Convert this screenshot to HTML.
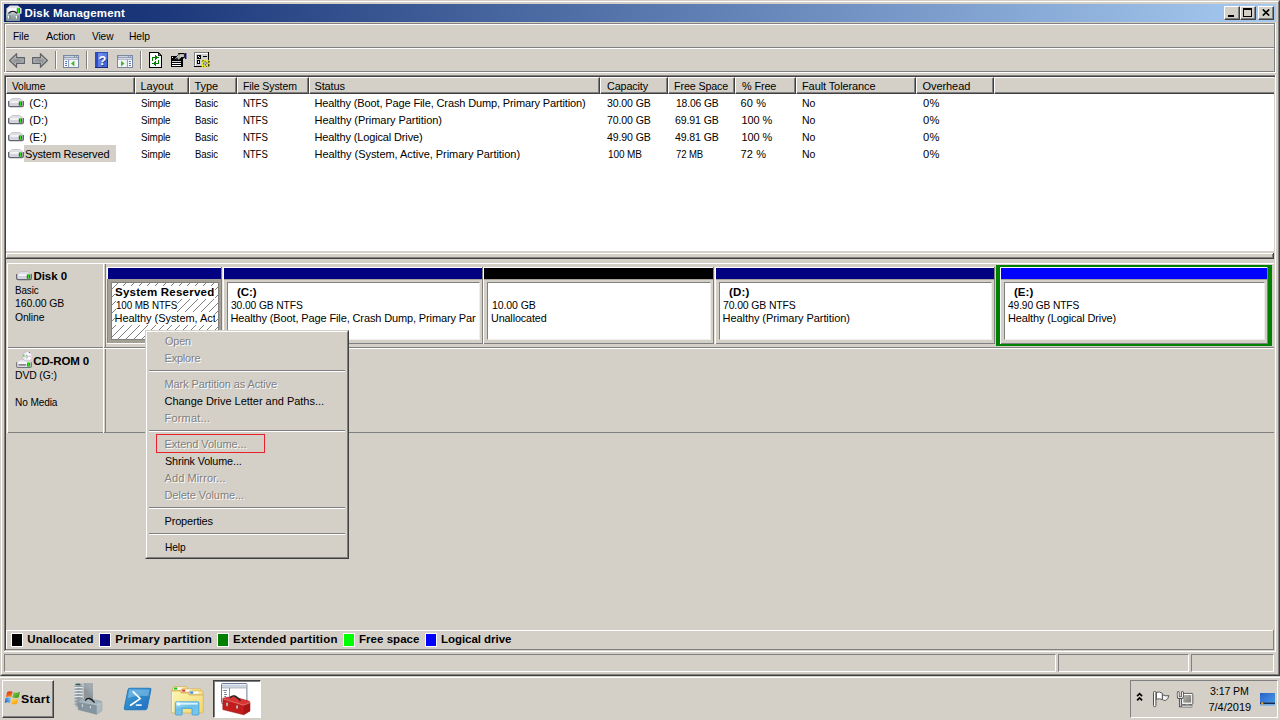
<!DOCTYPE html>
<html>
<head>
<meta charset="utf-8">
<title>Disk Management</title>
<style>
html,body{margin:0;padding:0;}
body{width:1280px;height:720px;overflow:hidden;background:#d4d0c8;position:relative;
 font-family:"Liberation Sans",sans-serif;font-size:11px;color:#000;line-height:13px;}
.a{position:absolute;white-space:nowrap;box-sizing:border-box;}
.t{position:absolute;white-space:pre;height:13px;line-height:13px;}
.b{font-weight:bold;font-size:11.5px;}
#title{left:4px;top:4px;width:1272px;height:18px;background:linear-gradient(to right,#0a246a 0%,#a6caf0 100%);}
.wbtn{position:absolute;top:6px;width:16px;height:14px;box-sizing:border-box;background:#d4d0c8;
 border-top:1px solid #fff;border-left:1px solid #fff;border-right:1px solid #404040;border-bottom:1px solid #404040;}
.wbtn i{position:absolute;left:0;top:0;right:0;bottom:0;border-right:1px solid #808080;border-bottom:1px solid #808080;}
.hd{position:absolute;top:77px;height:17px;box-sizing:border-box;background:#d4d0c8;
 border-top:1px solid #fff;border-left:1px solid #fff;border-right:1px solid #404040;border-bottom:1px solid #404040;}
.hd i{position:absolute;left:0;top:0;right:0;bottom:0;border-right:1px solid #808080;border-bottom:1px solid #808080;}
.sunk{position:absolute;box-sizing:border-box;border-top:1px solid #808080;border-left:1px solid #808080;border-right:1px solid #fff;border-bottom:1px solid #fff;}
.gray{color:#808080;text-shadow:1px 1px 0 #fff;}
.ln{position:absolute;}
.lg{position:absolute;top:633px;width:12px;height:14px;box-sizing:border-box;border:1px solid #fff;}
</style>
</head>
<body>

<svg width="0" height="0" style="position:absolute"><defs>
<linearGradient id="gArrow" x1="0" y1="0" x2="1" y2="0.6"><stop offset="0" stop-color="#bcbec0"/><stop offset="0.6" stop-color="#8c8e90"/><stop offset="1" stop-color="#a4a6a8"/></linearGradient>
<linearGradient id="gHelp" x1="0" y1="0" x2="1" y2="1"><stop offset="0" stop-color="#5a7be0"/><stop offset="0.5" stop-color="#5b7fe6"/><stop offset="1" stop-color="#3a5ac8"/></linearGradient>
<linearGradient id="gDrv" x1="0" y1="0" x2="0" y2="1"><stop offset="0" stop-color="#ffffff"/><stop offset="0.5" stop-color="#e4e8f2"/><stop offset="1" stop-color="#b4bac6"/></linearGradient>
<linearGradient id="gTool" x1="0" y1="0" x2="0" y2="1"><stop offset="0" stop-color="#aab6ba"/><stop offset="1" stop-color="#7f8e94"/></linearGradient>
<linearGradient id="gPS" x1="0" y1="0" x2="1" y2="1"><stop offset="0" stop-color="#4aa4dc"/><stop offset="0.5" stop-color="#2e88c8"/><stop offset="1" stop-color="#2468c4"/></linearGradient>
<linearGradient id="gFold" x1="0" y1="0" x2="1" y2="1"><stop offset="0" stop-color="#fdf6b4"/><stop offset="1" stop-color="#f2d870"/></linearGradient>
<linearGradient id="gStand" x1="0" y1="0" x2="0.4" y2="1"><stop offset="0" stop-color="#c4ecfc"/><stop offset="0.5" stop-color="#6cc0e8"/><stop offset="1" stop-color="#7cc4ec"/></linearGradient>
<linearGradient id="gRed" x1="0" y1="0" x2="0" y2="1"><stop offset="0" stop-color="#e04040"/><stop offset="1" stop-color="#b01818"/></linearGradient>
<linearGradient id="gSrv" x1="0" y1="0" x2="1" y2="0"><stop offset="0" stop-color="#c8d0d4"/><stop offset="0.5" stop-color="#9098a0"/><stop offset="1" stop-color="#b8c0c4"/></linearGradient>
<linearGradient id="gTb" x1="0" y1="0" x2="1" y2="1"><stop offset="0" stop-color="#b4c0c8"/><stop offset="1" stop-color="#7a8a96"/></linearGradient>
<linearGradient id="gDesk" x1="0" y1="0" x2="1" y2="1"><stop offset="0" stop-color="#2a60c8"/><stop offset="1" stop-color="#4aa0e8"/></linearGradient>
<linearGradient id="gMon" x1="0" y1="0" x2="1" y2="1"><stop offset="0" stop-color="#b4b4ac"/><stop offset="1" stop-color="#7c7c74"/></linearGradient>
<linearGradient id="gFr" x1="0.3" y1="0" x2="0.6" y2="1"><stop offset="0" stop-color="#d82c1c"/><stop offset="1" stop-color="#f88c18"/></linearGradient><linearGradient id="gFg" x1="0" y1="0" x2="1" y2="0.6"><stop offset="0" stop-color="#8ccc40"/><stop offset="1" stop-color="#3c9c20"/></linearGradient><linearGradient id="gFb" x1="0" y1="0.6" x2="1" y2="0.2"><stop offset="0" stop-color="#2464c4"/><stop offset="1" stop-color="#8cd0f4"/></linearGradient><linearGradient id="gFy" x1="0" y1="0" x2="0.6" y2="1"><stop offset="0" stop-color="#fce45c"/><stop offset="1" stop-color="#f8a010"/></linearGradient>
</defs></svg>
<div class="a" style="left:0;top:0;width:1280px;height:676px;border-top:1px solid #d4d0c8;border-left:1px solid #d4d0c8;border-right:1px solid #404040;border-bottom:1px solid #404040"></div>
<div class="a" style="left:1px;top:1px;width:1278px;height:674px;border-top:1px solid #fff;border-left:1px solid #fff;border-right:1px solid #808080;border-bottom:1px solid #808080"></div>
<div id="title" class="a"></div>
<div class="t b" style="left:24.50px;top:7px;letter-spacing:0.182px;color:#fff">Disk Management</div>
<div class="wbtn" style="left:1224px"><i></i><b class="a" style="left:3px;top:8px;width:6px;height:2px;background:#000"></b></div>
<div class="wbtn" style="left:1240px"><i></i><b class="a" style="left:2px;top:1px;width:9px;height:9px;border:1px solid #000;border-top:2px solid #000"></b></div>
<div class="wbtn" style="left:1258px"><i></i><svg class="a" style="left:3px;top:2px" width="8" height="7" viewBox="0 0 8 7"><path d="M0.8 0.4L7.2 6.6M7.2 0.4L0.8 6.6" stroke="#000" stroke-width="1.6" fill="none"/></svg></div>
<svg class="a" style="left:6px;top:5px" width="16" height="16" viewBox="0 0 16 16" ><path d="M4 0.5H11.8L15.6 3.6V8.4H0.4V3.6Z" fill="#e2e2e8"/><rect x="1.2" y="3.4" width="13.6" height="5" fill="#ececf8"/><rect x="2.4" y="3.4" width="8.6" height="1.8" fill="#fff"/><path d="M0.6 3.6V8.4M15.4 3.6V8.4" stroke="#90909c" stroke-width="1"/><rect x="10.8" y="3.2" width="3.2" height="5" fill="#54505c"/><rect x="11.5" y="2.8" width="1.8" height="5.2" fill="#30e418"/><rect x="0" y="8" width="14" height="8" rx="0.8" fill="url(#gTool)"/><rect x="0.2" y="8" width="13.6" height="1.8" fill="#b4c2c6"/><path d="M2.4 8.4Q6.8 4.2 11.2 8.4" fill="none" stroke="#141414" stroke-width="1.25"/><rect x="1.9" y="10.8" width="1.5" height="2.8" rx="0.5" fill="#fff"/><rect x="3.4" y="10.6" width="0.9" height="3.2" fill="#5a666a"/><rect x="9.9" y="10.8" width="1.5" height="2.8" rx="0.5" fill="#fff"/><rect x="11.4" y="10.6" width="0.9" height="3.2" fill="#5a666a"/></svg>
<div class="ln" style="left:4px;top:23px;width:1271px;height:1px;background:#808080"></div>
<div class="ln" style="left:5px;top:24px;width:1269px;height:1px;background:#fff"></div>
<div class="ln" style="left:5px;top:47px;width:1269px;height:1px;background:#808080"></div>
<div class="ln" style="left:5px;top:48px;width:1269px;height:1px;background:#fff"></div>
<div class="ln" style="left:5px;top:71px;width:1269px;height:1px;background:#808080"></div>
<div class="ln" style="left:4px;top:72px;width:1272px;height:1px;background:#fff"></div>
<div class="ln" style="left:4px;top:23px;width:1px;height:49px;background:#808080"></div>
<div class="ln" style="left:5px;top:24px;width:1px;height:48px;background:#fff"></div>
<div class="ln" style="left:1274px;top:24px;width:1px;height:48px;background:#808080"></div>
<div class="ln" style="left:1275px;top:23px;width:1px;height:50px;background:#fff"></div>
<div class="t" style="left:13.25px;top:30px;letter-spacing:-0.120px;transform:scaleX(0.9277);transform-origin:0 0">File</div>
<div class="t" style="left:45.75px;top:30px;letter-spacing:-0.120px;transform:scaleX(0.9797);transform-origin:0 0">Action</div>
<div class="t" style="left:91.75px;top:30px;letter-spacing:-0.120px;transform:scaleX(0.9212);transform-origin:0 0">View</div>
<div class="t" style="left:129.25px;top:30px;letter-spacing:-0.120px;transform:scaleX(0.9370);transform-origin:0 0">Help</div>
<div class="ln" style="left:55px;top:51px;width:1px;height:18px;background:#808080"></div>
<div class="ln" style="left:56px;top:51px;width:1px;height:18px;background:#fff"></div>
<div class="ln" style="left:86px;top:51px;width:1px;height:18px;background:#808080"></div>
<div class="ln" style="left:87px;top:51px;width:1px;height:18px;background:#fff"></div>
<div class="ln" style="left:140px;top:51px;width:1px;height:18px;background:#808080"></div>
<div class="ln" style="left:141px;top:51px;width:1px;height:18px;background:#fff"></div>
<svg class="a" style="left:9px;top:53px" width="16" height="15" viewBox="0 0 16 15" ><path d="M0.6 7.5L7.6 0.7V4.6H15.4V10.4H7.6V14.3Z" fill="url(#gArrow)" stroke="#5e6266" stroke-width="1.15" stroke-linejoin="round"/><path d="M2.4 7.5L6.5 3.5V5.8H14.2V9.2H6.5V11.5Z" fill="none" stroke="#c2c4c6" stroke-width="0.7" opacity="0.8"/></svg>
<svg class="a" style="left:32px;top:53px" width="16" height="15" viewBox="0 0 16 15" ><g transform="translate(16,0) scale(-1,1)"><path d="M0.6 7.5L7.6 0.7V4.6H15.4V10.4H7.6V14.3Z" fill="url(#gArrow)" stroke="#5e6266" stroke-width="1.15" stroke-linejoin="round"/><path d="M2.4 7.5L6.5 3.5V5.8H14.2V9.2H6.5V11.5Z" fill="none" stroke="#c2c4c6" stroke-width="0.7" opacity="0.8"/></g></svg>
<svg class="a" style="left:63px;top:55px" width="16" height="13" viewBox="0 0 16 13" ><rect x="0.5" y="0.5" width="15" height="12" fill="#fbfcfe" stroke="#7a88a2"/><rect x="1" y="1" width="14" height="3.6" fill="#8492ac"/><rect x="1.4" y="1.2" width="9.8" height="1" fill="#dde3ee"/><rect x="12.2" y="1.2" width="1" height="1" fill="#eef2f8"/><rect x="14" y="1.2" width="0.9" height="1" fill="#eef2f8"/><rect x="1.2" y="3" width="13.6" height="1" fill="#d4dcea"/><rect x="5.2" y="4.6" width="1" height="8" fill="#7a88a2"/><rect x="2" y="6" width="2.2" height="1" rx="0.4" fill="#3c68cc"/><rect x="2" y="8" width="2.2" height="1" rx="0.4" fill="#3c68cc"/><rect x="2" y="10" width="2.2" height="1" rx="0.4" fill="#3c68cc"/><rect x="6.4" y="5" width="8.4" height="7" fill="#f2f4f8"/><path d="M11.4 5.8V11.4L7.9 8.6Z" fill="#44b82c"/></svg>
<svg class="a" style="left:95px;top:52px" width="13" height="16" viewBox="0 0 13 16" ><rect x="0" y="0" width="13" height="16" fill="#2c4cc4"/><rect x="3" y="1" width="9" height="14" fill="url(#gHelp)"/><rect x="3" y="1" width="4.5" height="7" fill="#7c94ec" opacity="0.6"/><rect x="7.5" y="8" width="4.5" height="7" fill="#4068d8" opacity="0.6"/><rect x="0" y="15" width="13" height="1" fill="#20287c"/><rect x="12" y="8" width="1" height="8" fill="#20287c" opacity="0.7"/><text x="8.3" y="13.6" font-family="Liberation Sans,sans-serif" font-weight="bold" font-size="13" fill="#2c3c94" text-anchor="middle">?</text><text x="7.5" y="12.9" font-family="Liberation Sans,sans-serif" font-weight="bold" font-size="13" fill="#fff" text-anchor="middle">?</text></svg>
<svg class="a" style="left:117px;top:55px" width="16" height="13" viewBox="0 0 16 13" ><rect x="0.5" y="0.5" width="15" height="12" fill="#fbfcfe" stroke="#7a88a2"/><rect x="1" y="1" width="14" height="3.6" fill="#8492ac"/><rect x="1.4" y="1.2" width="9.8" height="1" fill="#dde3ee"/><rect x="12.2" y="1.2" width="1" height="1" fill="#eef2f8"/><rect x="14" y="1.2" width="0.9" height="1" fill="#eef2f8"/><rect x="1.2" y="3" width="13.6" height="1" fill="#d4dcea"/><rect x="9.8" y="4.6" width="1" height="8" fill="#7a88a2"/><rect x="11.8" y="6" width="2.2" height="1" rx="0.4" fill="#3c68cc"/><rect x="11.8" y="8" width="2.2" height="1" rx="0.4" fill="#3c68cc"/><rect x="11.8" y="10" width="2.2" height="1" rx="0.4" fill="#3c68cc"/><rect x="1.2" y="5" width="8.4" height="7" fill="#f2f4f8"/><path d="M4 5.8V11.4L7.5 8.6Z" fill="#44b82c"/></svg>
<svg class="a" style="left:149px;top:52px" width="13" height="16" viewBox="0 0 13 16" ><path d="M0.5 0.5H9.2L12.5 3.8V15.5H0.5Z" fill="#fff" stroke="#000" stroke-width="1.1"/><path d="M9 0.5V4H12.5Z" fill="#000"/><rect x="9.6" y="2.4" width="1" height="1" fill="#fff"/><g shape-rendering="crispEdges"><g fill="#008000"><rect x="3" y="5" width="6" height="1"/><rect x="6" y="3" width="1" height="5"/><rect x="7" y="4" width="1" height="3"/><rect x="8" y="5" width="2" height="1"/><rect x="3" y="6" width="1" height="3"/><rect x="4" y="11" width="6" height="1"/><rect x="6" y="9" width="1" height="5"/><rect x="5" y="10" width="1" height="3"/><rect x="3" y="11" width="2" height="1"/><rect x="9" y="8" width="1" height="3"/></g></g></svg>
<svg class="a" style="left:171px;top:52px" width="16" height="16" viewBox="0 0 16 16" ><g shape-rendering="crispEdges"><rect x="0" y="4" width="12" height="11" fill="#000"/><rect x="1" y="5" width="1" height="1" fill="#fff"/><rect x="1" y="9" width="9" height="1" fill="#d0d0d0"/><rect x="1" y="11" width="9" height="1" fill="#fff"/><rect x="1" y="13" width="9" height="1" fill="#fff"/></g><path d="M3.2 7.2L7.6 2.6L9 1.6H13.4V5.6H10.2L8 7.8L6 6.6Z" fill="#c8c8c8" stroke="#000" stroke-width="0.9"/><path d="M4.6 6.6L8 3.2M6 7.4L9.2 4.2M7.6 7.6L10 5.2" stroke="#fff" stroke-width="0.7" stroke-dasharray="1 1"/><path d="M5.4 7L8.6 3.8M6.8 7.6L9.6 4.8" stroke="#000" stroke-width="0.7" stroke-dasharray="1 1"/><path d="M7.2 1.5H13.2M10 5.9H13.2" stroke="#000" stroke-width="1"/><rect x="14" y="1" width="1.4" height="6" fill="#0000c8"/></svg>
<svg class="a" style="left:194px;top:52px" width="16" height="16" viewBox="0 0 16 16" ><g shape-rendering="crispEdges"><rect x="0" y="0" width="15" height="15" fill="#d0d0d0"/><rect x="0" y="0" width="15" height="1" fill="#808080"/><rect x="0" y="0" width="1" height="15" fill="#808080"/><rect x="1" y="1" width="13" height="1" fill="#fff"/><rect x="1" y="1" width="1" height="13" fill="#fff"/><rect x="0" y="14" width="15" height="1" fill="#000"/><rect x="14" y="0" width="1" height="15" fill="#000"/><rect x="3" y="3" width="4" height="4" fill="#000"/><rect x="4" y="4" width="1" height="1" fill="#fff"/><rect x="5" y="5" width="1" height="1" fill="#fff"/><rect x="9" y="4" width="4" height="1" fill="#000"/><rect x="3" y="8" width="3" height="4" fill="#000"/><rect x="4" y="9" width="1" height="2" fill="#fff"/><rect x="9" y="8" width="3" height="3" fill="#000"/><rect x="10" y="8" width="1" height="2" fill="#d0d0d0"/></g><path d="M11.2 6.2L12.2 8.8L14.8 7.6L13.8 10L15.8 11.2L13.6 12.2L14.6 14.8L12 13.6L11 15.8L10 13.6L7.6 14.8L8.6 12.2L6.6 11L8.8 10L7.8 7.6L10.2 8.8Z" fill="#c0c0b4" stroke="#f0f000" stroke-width="1.05" stroke-linejoin="miter" transform="translate(1.1,1.4) scale(0.9)"/><g fill="#181800"><rect x="10.6" y="9.4" width="0.9" height="0.9"/><rect x="12.4" y="10.6" width="0.9" height="0.9"/><rect x="9.2" y="11.4" width="0.9" height="0.9"/><rect x="11" y="12.4" width="0.9" height="0.9"/><rect x="15" y="9.4" width="0.9" height="0.9"/><rect x="15" y="12.6" width="0.9" height="0.9"/><rect x="8.2" y="8.6" width="0.9" height="0.9"/></g></svg>
<div class="ln" style="left:4px;top:75px;width:1272px;height:1px;background:#808080"></div>
<div class="ln" style="left:5px;top:76px;width:1270px;height:1px;background:#404040"></div>
<div class="ln" style="left:4px;top:75px;width:1px;height:576px;background:#808080"></div>
<div class="ln" style="left:5px;top:76px;width:1px;height:574px;background:#404040"></div>
<div class="ln" style="left:1275px;top:75px;width:1px;height:577px;background:#fff"></div>
<div class="ln" style="left:4px;top:651px;width:1272px;height:1px;background:#fff"></div>
<div class="a" style="left:6px;top:77px;width:1268px;height:174px;background:#fff"></div>
<div class="a" style="left:6px;top:77px;width:1268px;height:17px;background:#d4d0c8"></div>
<div class="hd" style="left:6px;width:129px"><i></i></div>
<div class="t" style="left:11.75px;top:80px;letter-spacing:-0.120px;transform:scaleX(0.9243);transform-origin:0 0">Volume</div>
<div class="hd" style="left:135px;width:54px"><i></i></div>
<div class="t" style="left:140.50px;top:80px;letter-spacing:-0.044px">Layout</div>
<div class="hd" style="left:189px;width:48px"><i></i></div>
<div class="t" style="left:194.50px;top:80px;letter-spacing:-0.077px">Type</div>
<div class="hd" style="left:237px;width:72px"><i></i></div>
<div class="t" style="left:242.50px;top:80px;letter-spacing:-0.120px;transform:scaleX(0.9583);transform-origin:0 0">File System</div>
<div class="hd" style="left:309px;width:291px"><i></i></div>
<div class="t" style="left:314.50px;top:80px;letter-spacing:-0.137px">Status</div>
<div class="hd" style="left:600px;width:68px"><i></i></div>
<div class="t" style="left:606.70px;top:80px;letter-spacing:-0.120px;transform:scaleX(0.9798);transform-origin:0 0">Capacity</div>
<div class="hd" style="left:668px;width:67px"><i></i></div>
<div class="t" style="left:674.20px;top:80px;letter-spacing:-0.120px;transform:scaleX(0.9737);transform-origin:0 0">Free Space</div>
<div class="hd" style="left:735px;width:61px"><i></i></div>
<div class="t" style="left:741.50px;top:80px;letter-spacing:-0.120px;transform:scaleX(0.9874);transform-origin:0 0">% Free</div>
<div class="hd" style="left:796px;width:120px"><i></i></div>
<div class="t" style="left:802.00px;top:80px;letter-spacing:-0.099px">Fault Tolerance</div>
<div class="hd" style="left:916px;width:78px"><i></i></div>
<div class="t" style="left:922.50px;top:80px;letter-spacing:-0.070px">Overhead</div>
<div class="hd" style="left:994px;width:280px;border-right:none"><i style="border-right:none"></i></div>
<div class="a" style="left:24px;top:145px;width:92px;height:17px;background:#d4d0c8"></div>
<svg class="a" style="left:8px;top:98px" width="16" height="10" viewBox="0 0 16 10" ><path d="M4.2 0.5H11.8L15.4 3.4V7Q15.4 8.5 13.8 8.5H2.2Q0.6 8.5 0.6 7V3.4Z" fill="#dedee2" stroke="#b8b8be" stroke-width="0.7"/><rect x="1.4" y="3.4" width="13.4" height="4.8" fill="#d2d4de"/><rect x="2.4" y="3.3" width="8.8" height="1.4" fill="#fff"/><path d="M0.6 3V7Q0.6 8.6 2.2 8.6H13.8Q15.4 8.6 15.4 7V3" fill="none" stroke="#66666e" stroke-width="1.25"/><rect x="10.8" y="3.6" width="3.4" height="4" fill="#4c4858"/><rect x="11.8" y="3.3" width="1.4" height="4.6" fill="#38dc20"/></svg>
<div class="t" style="left:29.25px;top:97px;letter-spacing:0.029px">(C:)</div>
<div class="t" style="left:140.50px;top:97px;letter-spacing:-0.120px;transform:scaleX(0.8965);transform-origin:0 0">Simple</div>
<div class="t" style="left:194.50px;top:97px;letter-spacing:-0.120px;transform:scaleX(0.8730);transform-origin:0 0">Basic</div>
<div class="t" style="left:242.50px;top:97px;letter-spacing:-0.120px;transform:scaleX(0.8743);transform-origin:0 0">NTFS</div>
<div class="t" style="left:314.50px;top:97px;letter-spacing:-0.127px">Healthy (Boot, Page File, Crash Dump, Primary Partition)</div>
<div class="t" style="left:606.70px;top:97px;letter-spacing:-0.120px;transform:scaleX(0.9603);transform-origin:0 0">30.00 GB</div>
<div class="t" style="left:675.80px;top:97px;letter-spacing:-0.120px;transform:scaleX(0.9338);transform-origin:0 0">18.06 GB</div>
<div class="t" style="left:740.50px;top:97px;letter-spacing:0.136px">60 %</div>
<div class="t" style="left:802.00px;top:97px;letter-spacing:-0.120px;transform:scaleX(0.9549);transform-origin:0 0">No</div>
<div class="t" style="left:922.50px;top:97px;letter-spacing:0.200px;transform:scaleX(1.0173);transform-origin:0 0">0%</div>
<svg class="a" style="left:8px;top:115px" width="16" height="10" viewBox="0 0 16 10" ><path d="M4.2 0.5H11.8L15.4 3.4V7Q15.4 8.5 13.8 8.5H2.2Q0.6 8.5 0.6 7V3.4Z" fill="#dedee2" stroke="#b8b8be" stroke-width="0.7"/><rect x="1.4" y="3.4" width="13.4" height="4.8" fill="#d2d4de"/><rect x="2.4" y="3.3" width="8.8" height="1.4" fill="#fff"/><path d="M0.6 3V7Q0.6 8.6 2.2 8.6H13.8Q15.4 8.6 15.4 7V3" fill="none" stroke="#66666e" stroke-width="1.25"/><rect x="10.8" y="3.6" width="3.4" height="4" fill="#4c4858"/><rect x="11.8" y="3.3" width="1.4" height="4.6" fill="#38dc20"/></svg>
<div class="t" style="left:29.25px;top:114px;letter-spacing:0.112px">(D:)</div>
<div class="t" style="left:140.50px;top:114px;letter-spacing:-0.120px;transform:scaleX(0.8965);transform-origin:0 0">Simple</div>
<div class="t" style="left:194.50px;top:114px;letter-spacing:-0.120px;transform:scaleX(0.8730);transform-origin:0 0">Basic</div>
<div class="t" style="left:242.50px;top:114px;letter-spacing:-0.120px;transform:scaleX(0.8743);transform-origin:0 0">NTFS</div>
<div class="t" style="left:314.50px;top:114px;letter-spacing:-0.060px">Healthy (Primary Partition)</div>
<div class="t" style="left:606.70px;top:114px;letter-spacing:-0.120px;transform:scaleX(0.9603);transform-origin:0 0">70.00 GB</div>
<div class="t" style="left:674.60px;top:114px;letter-spacing:-0.120px;transform:scaleX(0.9603);transform-origin:0 0">69.91 GB</div>
<div class="t" style="left:741.50px;top:114px;letter-spacing:-0.077px">100 %</div>
<div class="t" style="left:802.00px;top:114px;letter-spacing:-0.120px;transform:scaleX(0.9549);transform-origin:0 0">No</div>
<div class="t" style="left:922.50px;top:114px;letter-spacing:0.200px;transform:scaleX(1.0173);transform-origin:0 0">0%</div>
<svg class="a" style="left:8px;top:132px" width="16" height="10" viewBox="0 0 16 10" ><path d="M4.2 0.5H11.8L15.4 3.4V7Q15.4 8.5 13.8 8.5H2.2Q0.6 8.5 0.6 7V3.4Z" fill="#dedee2" stroke="#b8b8be" stroke-width="0.7"/><rect x="1.4" y="3.4" width="13.4" height="4.8" fill="#d2d4de"/><rect x="2.4" y="3.3" width="8.8" height="1.4" fill="#fff"/><path d="M0.6 3V7Q0.6 8.6 2.2 8.6H13.8Q15.4 8.6 15.4 7V3" fill="none" stroke="#66666e" stroke-width="1.25"/><rect x="10.8" y="3.6" width="3.4" height="4" fill="#4c4858"/><rect x="11.8" y="3.3" width="1.4" height="4.6" fill="#38dc20"/></svg>
<div class="t" style="left:29.25px;top:131px;letter-spacing:-0.102px">(E:)</div>
<div class="t" style="left:140.50px;top:131px;letter-spacing:-0.120px;transform:scaleX(0.8965);transform-origin:0 0">Simple</div>
<div class="t" style="left:194.50px;top:131px;letter-spacing:-0.120px;transform:scaleX(0.8730);transform-origin:0 0">Basic</div>
<div class="t" style="left:242.50px;top:131px;letter-spacing:-0.120px;transform:scaleX(0.8743);transform-origin:0 0">NTFS</div>
<div class="t" style="left:314.50px;top:131px;letter-spacing:-0.141px">Healthy (Logical Drive)</div>
<div class="t" style="left:606.70px;top:131px;letter-spacing:-0.120px;transform:scaleX(0.9603);transform-origin:0 0">49.90 GB</div>
<div class="t" style="left:674.60px;top:131px;letter-spacing:-0.120px;transform:scaleX(0.9603);transform-origin:0 0">49.81 GB</div>
<div class="t" style="left:741.50px;top:131px;letter-spacing:-0.077px">100 %</div>
<div class="t" style="left:802.00px;top:131px;letter-spacing:-0.120px;transform:scaleX(0.9549);transform-origin:0 0">No</div>
<div class="t" style="left:922.50px;top:131px;letter-spacing:0.200px;transform:scaleX(1.0173);transform-origin:0 0">0%</div>
<svg class="a" style="left:8px;top:149px" width="16" height="10" viewBox="0 0 16 10" ><path d="M4.2 0.5H11.8L15.4 3.4V7Q15.4 8.5 13.8 8.5H2.2Q0.6 8.5 0.6 7V3.4Z" fill="#dedee2" stroke="#b8b8be" stroke-width="0.7"/><rect x="1.4" y="3.4" width="13.4" height="4.8" fill="#d2d4de"/><rect x="2.4" y="3.3" width="8.8" height="1.4" fill="#fff"/><path d="M0.6 3V7Q0.6 8.6 2.2 8.6H13.8Q15.4 8.6 15.4 7V3" fill="none" stroke="#66666e" stroke-width="1.25"/><rect x="10.8" y="3.6" width="3.4" height="4" fill="#4c4858"/><rect x="11.8" y="3.3" width="1.4" height="4.6" fill="#38dc20"/></svg>
<div class="t" style="left:25.00px;top:148px;letter-spacing:-0.164px">System Reserved</div>
<div class="t" style="left:140.50px;top:148px;letter-spacing:-0.120px;transform:scaleX(0.8965);transform-origin:0 0">Simple</div>
<div class="t" style="left:194.50px;top:148px;letter-spacing:-0.120px;transform:scaleX(0.8730);transform-origin:0 0">Basic</div>
<div class="t" style="left:242.50px;top:148px;letter-spacing:-0.120px;transform:scaleX(0.8743);transform-origin:0 0">NTFS</div>
<div class="t" style="left:314.50px;top:148px;letter-spacing:-0.040px">Healthy (System, Active, Primary Partition)</div>
<div class="t" style="left:607.60px;top:148px;letter-spacing:-0.120px;transform:scaleX(0.9088);transform-origin:0 0">100 MB</div>
<div class="t" style="left:675.80px;top:148px;letter-spacing:-0.120px;transform:scaleX(0.8685);transform-origin:0 0">72 MB</div>
<div class="t" style="left:740.50px;top:148px;letter-spacing:0.136px">72 %</div>
<div class="t" style="left:802.00px;top:148px;letter-spacing:-0.120px;transform:scaleX(0.9549);transform-origin:0 0">No</div>
<div class="t" style="left:922.50px;top:148px;letter-spacing:0.200px;transform:scaleX(1.0173);transform-origin:0 0">0%</div>
<div class="ln" style="left:6px;top:253px;width:1267px;height:1px;background:#fff"></div>
<div class="ln" style="left:6px;top:253px;width:1px;height:4px;background:#fff"></div>
<div class="ln" style="left:7px;top:257px;width:1266px;height:1px;background:#808080"></div>
<div class="ln" style="left:6px;top:258px;width:1268px;height:1px;background:#404040"></div>
<div class="ln" style="left:1272px;top:254px;width:1px;height:4px;background:#808080"></div>
<div class="ln" style="left:1273px;top:253px;width:1px;height:6px;background:#404040"></div>
<div class="ln" style="left:7px;top:263px;width:1267px;height:1px;background:#fff"></div>
<div class="ln" style="left:7px;top:347px;width:1267px;height:1px;background:#808080"></div>
<div class="ln" style="left:7px;top:263px;width:1px;height:85px;background:#fff"></div>
<div class="ln" style="left:103px;top:263px;width:1px;height:85px;background:#fff"></div>
<div class="ln" style="left:105px;top:264px;width:1px;height:84px;background:#808080"></div>
<div class="ln" style="left:7px;top:348px;width:1267px;height:1px;background:#fff"></div>
<div class="ln" style="left:7px;top:432px;width:1267px;height:1px;background:#808080"></div>
<div class="ln" style="left:7px;top:348px;width:1px;height:85px;background:#fff"></div>
<div class="ln" style="left:103px;top:348px;width:1px;height:85px;background:#fff"></div>
<div class="ln" style="left:105px;top:349px;width:1px;height:84px;background:#808080"></div>
<svg class="a" style="left:16px;top:271px" width="16" height="10" viewBox="0 0 16 10" ><path d="M4.2 0.5H11.8L15.4 3.4V7Q15.4 8.5 13.8 8.5H2.2Q0.6 8.5 0.6 7V3.4Z" fill="#dedee2" stroke="#b8b8be" stroke-width="0.7"/><rect x="1.4" y="3.4" width="13.4" height="4.8" fill="#d2d4de"/><rect x="2.4" y="3.3" width="8.8" height="1.4" fill="#fff"/><path d="M0.6 3V7Q0.6 8.6 2.2 8.6H13.8Q15.4 8.6 15.4 7V3" fill="none" stroke="#66666e" stroke-width="1.25"/><rect x="10.8" y="3.6" width="3.4" height="4" fill="#4c4858"/><rect x="11.8" y="3.3" width="1.4" height="4.6" fill="#38dc20"/></svg>
<svg class="a" style="left:16px;top:351px" width="16" height="18" viewBox="0 0 16 18" ><path d="M4.2 8.5H11.8L15.4 11.4V15Q15.4 16.5 13.8 16.5H2.2Q0.6 16.5 0.6 15V11.4Z" fill="#e6e6ea" stroke="#c4c4c8" stroke-width="0.6"/><circle cx="11" cy="5.4" r="4.7" fill="#ececf0" stroke="#b4b4bc" stroke-width="0.7"/><path d="M11 0.8A4.6 4.6 0 0 1 13.6 9.2L11 5.4Z" fill="#fff" opacity="0.8"/><circle cx="11" cy="5.4" r="1.2" fill="#d4d0c8" stroke="#a0a0a8" stroke-width="0.5"/><rect x="7" y="3.6" width="1.6" height="2" fill="#40e030"/><rect x="12.8" y="1" width="1.2" height="1.2" fill="#e030e0"/><rect x="13.6" y="4.8" width="1" height="1" fill="#b040b0"/><rect x="1.4" y="11.4" width="13.4" height="4.8" fill="#dcdce8"/><rect x="2.4" y="11.2" width="9" height="1.5" fill="#fff"/><path d="M0.6 11.2V15Q0.6 16.5 2.2 16.5H13.8Q15.4 16.5 15.4 15V11.2" fill="none" stroke="#74747c" stroke-width="1.1"/><rect x="2.4" y="13.2" width="7.6" height="1.2" rx="0.6" fill="#6c6864"/><rect x="11" y="11.8" width="3.2" height="3.6" fill="#5c5868"/><rect x="11.7" y="11.2" width="1.7" height="4.8" fill="#30e818"/></svg>
<div class="t b" style="left:33.40px;top:270px;letter-spacing:-0.027px">Disk 0</div>
<div class="t" style="left:14.70px;top:284px;letter-spacing:-0.120px;transform:scaleX(0.8953);transform-origin:0 0">Basic</div>
<div class="t" style="left:15.30px;top:297px;letter-spacing:-0.120px;transform:scaleX(0.9542);transform-origin:0 0">160.00 GB</div>
<div class="t" style="left:14.70px;top:311px;letter-spacing:-0.120px;transform:scaleX(0.9428);transform-origin:0 0">Online</div>
<div class="t b" style="left:33.25px;top:355px;letter-spacing:-0.138px">CD-ROM 0</div>
<div class="t" style="left:14.70px;top:369px;letter-spacing:-0.120px;transform:scaleX(0.9447);transform-origin:0 0">DVD (G:)</div>
<div class="t" style="left:14.70px;top:396px;letter-spacing:-0.120px;transform:scaleX(0.9189);transform-origin:0 0">No Media</div>
<svg width="0" height="0" style="position:absolute"><defs><pattern id="hatch" width="8" height="8" patternUnits="userSpaceOnUse" patternTransform="translate(-2,0)"><rect x="0" y="7" width="1" height="1" fill="#808080"/><rect x="1" y="6" width="1" height="1" fill="#808080"/><rect x="2" y="5" width="1" height="1" fill="#808080"/><rect x="3" y="4" width="1" height="1" fill="#808080"/><rect x="4" y="3" width="1" height="1" fill="#808080"/><rect x="5" y="2" width="1" height="1" fill="#808080"/><rect x="6" y="1" width="1" height="1" fill="#808080"/><rect x="7" y="0" width="1" height="1" fill="#808080"/></pattern></defs></svg>
<div class="a" style="left:106px;top:267px;width:2px;height:77px;background:#fff"></div>
<div class="ln" style="left:106px;top:267px;width:1px;height:77px;background:#e8e5e0"></div>
<div class="ln" style="left:108px;top:267px;width:113px;height:1px;background:#fff"></div>
<div class="a" style="left:108px;top:268px;width:113px;height:11px;background:#000080"></div>
<div class="ln" style="left:221px;top:267px;width:1px;height:77px;background:#808080"></div>
<div class="ln" style="left:108px;top:343px;width:113px;height:1px;background:#808080"></div>
<div class="a" style="left:107px;top:279px;width:114px;height:64px;background:#a4a096;border-left:1px solid #8c8880"></div>
<div class="ln" style="left:107px;top:343px;width:114px;height:1px;background:#fff"></div>
<div class="a" style="left:111px;top:282px;width:108px;height:58px;background:#fff;border:1px solid #808080;border-right-color:#808080;border-bottom-color:#808080;overflow:hidden">
<svg class="a" style="left:0;top:0" width="108" height="58" shape-rendering="crispEdges"><rect x="0" y="0" width="108" height="58" fill="url(#hatch)"/></svg>
<div class="a" style="left:0;top:0;width:103px;height:56px;overflow:hidden">
<div class="t b" style="left:3.00px;top:3px;letter-spacing:0.242px;background:#fff">System Reserved</div>
<div class="t" style="left:3.75px;top:16px;letter-spacing:-0.120px;transform:scaleX(0.8951);transform-origin:0 0;background:#fff">100 MB NTFS</div>
<div class="t" style="left:2.50px;top:29px;letter-spacing:-0.040px;background:#fff">Healthy (System, Active, Primary Partition)</div>
</div></div>
<div class="a" style="left:222px;top:267px;width:2px;height:77px;background:#fff"></div>
<div class="ln" style="left:222px;top:267px;width:1px;height:77px;background:#e8e5e0"></div>
<div class="ln" style="left:224px;top:267px;width:258px;height:1px;background:#fff"></div>
<div class="a" style="left:224px;top:268px;width:258px;height:11px;background:#000080"></div>
<div class="ln" style="left:482px;top:267px;width:1px;height:77px;background:#808080"></div>
<div class="ln" style="left:224px;top:343px;width:258px;height:1px;background:#808080"></div>
<div class="ln" style="left:224px;top:279px;width:258px;height:1px;background:#a8a49c"></div>
<div class="a" style="left:227px;top:282px;width:253px;height:58px;background:#fff;border:1px solid #808080;border-right-color:#f0eeea;border-bottom-color:#f0eeea;overflow:hidden">
<div class="a" style="left:0;top:0;width:248px;height:56px;overflow:hidden">
<div class="t b" style="left:9.00px;top:3px;letter-spacing:-0.071px">(C:)</div>
<div class="t" style="left:2.50px;top:16px;letter-spacing:-0.120px;transform:scaleX(0.9350);transform-origin:0 0">30.00 GB NTFS</div>
<div class="t" style="left:2.50px;top:29px;letter-spacing:-0.127px">Healthy (Boot, Page File, Crash Dump, Primary Partition)</div>
</div></div>
<div class="a" style="left:483px;top:267px;width:1px;height:77px;background:#fff"></div>
<div class="ln" style="left:484px;top:267px;width:229px;height:1px;background:#fff"></div>
<div class="a" style="left:484px;top:268px;width:229px;height:11px;background:#000"></div>
<div class="ln" style="left:713px;top:267px;width:1px;height:77px;background:#808080"></div>
<div class="ln" style="left:484px;top:343px;width:229px;height:1px;background:#808080"></div>
<div class="ln" style="left:484px;top:279px;width:229px;height:1px;background:#a8a49c"></div>
<div class="a" style="left:487px;top:282px;width:224px;height:58px;background:#fff;border:1px solid #808080;border-right-color:#f0eeea;border-bottom-color:#f0eeea;overflow:hidden">
<div class="a" style="left:0;top:0;width:219px;height:56px;overflow:hidden">
<div class="t" style="left:3.70px;top:16px;letter-spacing:-0.120px;transform:scaleX(0.9603);transform-origin:0 0">10.00 GB</div>
<div class="t" style="left:3.00px;top:29px;letter-spacing:-0.120px;transform:scaleX(0.9775);transform-origin:0 0">Unallocated</div>
</div></div>
<div class="a" style="left:714px;top:267px;width:2px;height:77px;background:#fff"></div>
<div class="ln" style="left:714px;top:267px;width:1px;height:77px;background:#e8e5e0"></div>
<div class="ln" style="left:716px;top:267px;width:278px;height:1px;background:#fff"></div>
<div class="a" style="left:716px;top:268px;width:278px;height:11px;background:#000080"></div>
<div class="ln" style="left:994px;top:267px;width:1px;height:77px;background:#808080"></div>
<div class="ln" style="left:716px;top:343px;width:278px;height:1px;background:#808080"></div>
<div class="ln" style="left:716px;top:279px;width:278px;height:1px;background:#a8a49c"></div>
<div class="a" style="left:719px;top:282px;width:273px;height:58px;background:#fff;border:1px solid #808080;border-right-color:#f0eeea;border-bottom-color:#f0eeea;overflow:hidden">
<div class="a" style="left:0;top:0;width:268px;height:56px;overflow:hidden">
<div class="t b" style="left:9.00px;top:3px;letter-spacing:0.179px">(D:)</div>
<div class="t" style="left:2.50px;top:16px;letter-spacing:-0.120px;transform:scaleX(0.9480);transform-origin:0 0">70.00 GB NTFS</div>
<div class="t" style="left:2.50px;top:29px;letter-spacing:-0.060px">Healthy (Primary Partition)</div>
</div></div>
<div class="a" style="left:996px;top:265px;width:276px;height:81px;border:solid #008000;border-width:2px 4px 2px 4px"></div>
<div class="a" style="left:1000px;top:267px;width:1px;height:77px;background:#fff"></div>
<div class="ln" style="left:1001px;top:267px;width:266px;height:1px;background:#fff"></div>
<div class="a" style="left:1001px;top:268px;width:266px;height:11px;background:#0000ff"></div>
<div class="ln" style="left:1267px;top:267px;width:1px;height:77px;background:#808080"></div>
<div class="ln" style="left:1001px;top:343px;width:266px;height:1px;background:#808080"></div>
<div class="ln" style="left:1001px;top:279px;width:266px;height:1px;background:#a8a49c"></div>
<div class="a" style="left:1004px;top:282px;width:261px;height:58px;background:#fff;border:1px solid #808080;border-right-color:#f0eeea;border-bottom-color:#f0eeea;overflow:hidden">
<div class="a" style="left:0;top:0;width:256px;height:56px;overflow:hidden">
<div class="t b" style="left:9.00px;top:3px;letter-spacing:0.023px">(E:)</div>
<div class="t" style="left:3.00px;top:16px;letter-spacing:-0.120px;transform:scaleX(0.9284);transform-origin:0 0">49.90 GB NTFS</div>
<div class="t" style="left:3.00px;top:29px;letter-spacing:-0.141px">Healthy (Logical Drive)</div>
</div></div>
<div class="ln" style="left:6px;top:630px;width:1268px;height:1px;background:#fff"></div>
<div class="ln" style="left:6px;top:630px;width:1px;height:20px;background:#fff"></div>
<div class="ln" style="left:6px;top:649px;width:1268px;height:1px;background:#808080"></div>
<div class="ln" style="left:1273px;top:630px;width:1px;height:20px;background:#808080"></div>
<div class="lg" style="left:11px;background:#000"></div>
<div class="t b" style="left:27.30px;top:633px;letter-spacing:0.114px">Unallocated</div>
<div class="lg" style="left:99px;background:#000080"></div>
<div class="t b" style="left:115.30px;top:633px;letter-spacing:0.281px">Primary partition</div>
<div class="lg" style="left:217px;background:#008000"></div>
<div class="t b" style="left:233.00px;top:633px;letter-spacing:0.210px">Extended partition</div>
<div class="lg" style="left:343px;background:#00ff00"></div>
<div class="t b" style="left:359.00px;top:633px;letter-spacing:0.034px">Free space</div>
<div class="lg" style="left:425px;background:#0000ff"></div>
<div class="t b" style="left:441.00px;top:633px;letter-spacing:-0.045px">Logical drive</div>
<div class="sunk" style="left:4px;top:654px;width:1052px;height:18px"></div>
<div class="sunk" style="left:1058px;top:654px;width:131px;height:18px"></div>
<div class="sunk" style="left:1191px;top:654px;width:83px;height:18px"></div>
<div class="a" style="left:145px;top:330px;width:204px;height:229px;background:#d4d0c8;border:1px solid #d4d0c8;border-right-color:#404040;border-bottom-color:#404040"></div>
<div class="a" style="left:146px;top:331px;width:202px;height:227px;border:1px solid #fff;border-right-color:#808080;border-bottom-color:#808080"></div>
<div class="t gray" style="left:164.50px;top:335px;letter-spacing:-0.120px;transform:scaleX(0.9837);transform-origin:0 0">Open</div>
<div class="t gray" style="left:164.50px;top:352px;letter-spacing:-0.197px">Explore</div>
<div class="t gray" style="left:164.50px;top:378px;letter-spacing:-0.105px">Mark Partition as Active</div>
<div class="t" style="left:164.50px;top:395px;letter-spacing:-0.021px">Change Drive Letter and Paths...</div>
<div class="t gray" style="left:164.50px;top:412px;letter-spacing:0.194px">Format...</div>
<div class="t gray" style="left:164.50px;top:438px;letter-spacing:-0.067px">Extend Volume...</div>
<div class="t" style="left:164.50px;top:455px;letter-spacing:-0.120px;transform:scaleX(0.9803);transform-origin:0 0">Shrink Volume...</div>
<div class="t gray" style="left:164.50px;top:472px;letter-spacing:0.104px">Add Mirror...</div>
<div class="t gray" style="left:164.50px;top:489px;letter-spacing:-0.077px">Delete Volume...</div>
<div class="t" style="left:164.50px;top:515px;letter-spacing:-0.182px">Properties</div>
<div class="t" style="left:164.50px;top:541px;letter-spacing:-0.120px;transform:scaleX(0.9257);transform-origin:0 0">Help</div>
<div class="ln" style="left:149px;top:370px;width:196px;height:1px;background:#808080"></div>
<div class="ln" style="left:149px;top:371px;width:196px;height:1px;background:#fff"></div>
<div class="ln" style="left:149px;top:430px;width:196px;height:1px;background:#808080"></div>
<div class="ln" style="left:149px;top:431px;width:196px;height:1px;background:#fff"></div>
<div class="ln" style="left:149px;top:507px;width:196px;height:1px;background:#808080"></div>
<div class="ln" style="left:149px;top:508px;width:196px;height:1px;background:#fff"></div>
<div class="ln" style="left:149px;top:533px;width:196px;height:1px;background:#808080"></div>
<div class="ln" style="left:149px;top:534px;width:196px;height:1px;background:#fff"></div>
<div class="a" style="left:156px;top:434px;width:109px;height:19px;border:1px solid #e8202a"></div>
<div class="ln" style="left:0px;top:677px;width:1280px;height:1px;background:#fff"></div>
<div class="a" style="left:2px;top:680px;width:52px;height:38px;border:1px solid #fff;border-right-color:#404040;border-bottom-color:#404040"><i class="a" style="left:0;top:0;right:0;bottom:0;border-right:1px solid #808080;border-bottom:1px solid #808080"></i></div>
<div class="t b" style="left:21.00px;top:693px;letter-spacing:0.200px;transform:scaleX(1.0673);transform-origin:0 0">Start</div>
<div class="a" style="left:213px;top:680px;width:48px;height:38px;background:#fff;border:1px solid #404040;border-right-color:#fff;border-bottom-color:#fff"><i class="a" style="left:0;top:0;right:0;bottom:0;border-left:1px solid #808080;border-top:1px solid #808080"></i></div>
<svg class="a" style="left:4px;top:690px" width="17" height="15" viewBox="0 0 17 15" ><g transform="translate(0.7,0.3) scale(1.13,0.98)"><path d="M2.2 1.8Q4.5 0 7 1.6L5.8 7Q3.6 5.6 1 7Z" fill="url(#gFr)"/><path d="M8 2Q10.4 3.4 13.6 1.6L12.4 7Q9.6 8.6 6.8 7.2Z" fill="url(#gFg)"/><path d="M0.8 8Q3.2 6.4 5.6 8L4.6 13Q2.4 11.6 0 13Z" fill="url(#gFb)"/><path d="M6.6 8.4Q9.2 9.8 12.2 8L11 13.4Q8.4 15 5.6 13.6Z" fill="url(#gFy)"/></g></svg>
<svg class="a" style="left:73px;top:683px" width="30" height="32" viewBox="0 0 30 32" ><rect x="1.3" y="0.4" width="8.6" height="23.4" fill="url(#gSrv)"/><rect x="10.4" y="0.4" width="9.6" height="18" fill="#8e969c"/><path d="M10.4 0.4H20V9L10.4 3Z" fill="#a2aab0"/><path d="M13 0.4L20 8V14L10.4 4V0.4Z" fill="#9aa2a8" opacity="0.7"/><rect x="9.8" y="0.4" width="0.8" height="23" fill="#c4ccd0"/><g fill="#8a969c"><rect x="1.6" y="2.8" width="8" height="1.1"/><rect x="1.6" y="5.8" width="8" height="1.1"/><rect x="1.6" y="8.8" width="8" height="1.1"/><rect x="1.6" y="11.8" width="8" height="1.1"/><rect x="1.6" y="14.8" width="8" height="1.1"/><rect x="1.6" y="17.8" width="5" height="1.1"/><rect x="1.6" y="20.6" width="4" height="1.1"/></g><g fill="#e8eef0"><rect x="1.6" y="3.9" width="8" height="1"/><rect x="1.6" y="6.9" width="8" height="1"/><rect x="1.6" y="9.9" width="8" height="1"/><rect x="1.6" y="12.9" width="8" height="1"/></g><rect x="2.4" y="0.8" width="5" height="1.2" rx="0.6" fill="#2c5c58"/><polygon points="5.3,18.1 14.2,15.5 28.2,18.4 28.8,20.2 28.8,27.6 23.7,31.3 5.3,26.6" fill="#8494a0" stroke="#6c7c88" stroke-width="0.5"/><polygon points="5.3,18.1 14.2,15.5 28.2,18.4 28.8,20.2 23.7,21.8" fill="#a4b4bc"/><polygon points="23.7,21.8 28.8,20.2 28.8,27.6 23.7,31.3" fill="#acbac2"/><polyline points="5.3,18.700000000000003 23.7,21.8 28.8,20.2" fill="none" stroke="#fff" stroke-width="0.6" opacity="0.55"/><path d="M12.2 17.6Q15.6 12.4 21.6 19.6" fill="none" stroke="#1c1c1c" stroke-width="1.3"/><rect x="8.5" y="20.8" width="1.7" height="3.6" rx="0.7" fill="#e8ecee" stroke="#50585c" stroke-width="0.4"/><rect x="16.5" y="22.4" width="1.7" height="3.6" rx="0.7" fill="#e8ecee" stroke="#50585c" stroke-width="0.4"/></svg>
<svg class="a" style="left:122px;top:687px" width="31" height="24" viewBox="0 0 31 24" ><path d="M8 1.2H27.4Q29.2 1.2 28.8 3L25.2 20.8Q24.8 22.6 23 22.6H3.8Q2 22.6 2.4 20.8L6 3Q6.4 1.2 8 1.2Z" fill="url(#gPS)" stroke="#2a7cba" stroke-width="1.1"/><path d="M7.4 2.4H27.6L26.2 9.2Q16 7.6 5.8 11Z" fill="#8cc8ec" opacity="0.55"/><path d="M11.2 4.8L18.2 11.6L8.6 18.2" fill="none" stroke="#fff" stroke-width="1.7" stroke-linecap="round" stroke-linejoin="round"/><rect x="13.6" y="17.2" width="6.4" height="1.7" rx="0.8" fill="#d8f0ff"/></svg>
<svg class="a" style="left:171px;top:686px" width="33" height="30" viewBox="0 0 33 30" ><path d="M2.6 0.6H14.8Q15.8 0.6 16.1 1.5L17 4.6H1.2L1.7 1.5Q1.9 0.6 2.6 0.6Z" fill="#f6e494" stroke="#d2ae54" stroke-width="0.7"/><rect x="3" y="1.5" width="9.4" height="2" fill="#fff"/><rect x="3" y="1.5" width="3.2" height="2" fill="#18c428"/><path d="M10.6 2.8H29Q30 2.8 30.2 3.7L30.7 6.6H9.6Z" fill="#f6e494" stroke="#d2ae54" stroke-width="0.7"/><rect x="11.2" y="3.6" width="9.4" height="2" fill="#fff"/><rect x="11.2" y="3.6" width="3" height="2" fill="#d42c2c"/><path d="M18.6 4.8H30.6Q31.8 4.8 31.9 5.8L32.2 8.8H17.6Z" fill="#f6e494" stroke="#d2ae54" stroke-width="0.7"/><rect x="19.2" y="5.6" width="8.4" height="2" fill="#fff"/><rect x="19.2" y="5.6" width="3" height="2" fill="#2088f0"/><path d="M0.6 5H9.4L10.2 7H17.4L18.2 9H32.2V25.8Q32.2 27 31 27H1.8Q0.6 27 0.6 25.8Z" fill="url(#gFold)" stroke="#d6b25a" stroke-width="0.8"/><path d="M1.6 6.4V25.6" stroke="#fffbe0" stroke-width="1" opacity="0.8"/><path d="M4.3 16.8Q4.3 15.8 5.3 15.8H26.9Q27.9 15.8 27.9 16.8V28.2Q27.9 29 27.1 29H21.8Q21 29 21 28.2V22.4H11.2V28.2Q11.2 29 10.4 29H5.1Q4.3 29 4.3 28.2Z" fill="url(#gStand)" stroke="#38a0dc" stroke-width="0.8"/><rect x="5.4" y="16.8" width="21.4" height="1.8" fill="#e4f8ff" opacity="0.85"/><circle cx="7.6" cy="18" r="1.8" fill="#fff" opacity="0.9"/></svg>
<svg class="a" style="left:221px;top:683px" width="30" height="33" viewBox="0 0 30 33" ><rect x="0.5" y="0.5" width="25.4" height="20" rx="0.8" fill="#fff" stroke="#6c7c9c" stroke-width="1"/><rect x="1" y="1" width="24.4" height="1.6" fill="#e4e8f0"/><rect x="1" y="2.6" width="24.4" height="0.9" fill="#8c98b0"/><rect x="1" y="3.5" width="24.4" height="1" fill="#dce2ec"/><rect x="19.4" y="1.1" width="1" height="1.2" fill="#fff"/><rect x="21.4" y="1.1" width="1" height="1.2" fill="#fff"/><rect x="23.4" y="1.1" width="1" height="1.2" fill="#fff"/><rect x="1" y="4.5" width="24.4" height="0.8" fill="#8c98b0"/><rect x="8" y="5" width="0.9" height="15" fill="#7c88a4"/><g fill="#707890"><rect x="2.2" y="7" width="3.8" height="0.9"/><rect x="3.2" y="9" width="2" height="0.9"/><rect x="3" y="11" width="3" height="0.9"/><rect x="3.2" y="13" width="2" height="0.9"/></g><polygon points="1.8,15.2 11.6,13.4 28.2,18.2 29,19.7 29,27.9 22.7,31.8 1.8,26.6" fill="#c41c1c" stroke="#8c0c0c" stroke-width="0.5"/><polygon points="1.8,15.2 11.6,13.4 28.2,18.2 29,19.7 22.7,22.2" fill="#d83434"/><polygon points="22.7,22.2 29,19.7 29,27.9 22.7,31.8" fill="#a81414"/><polyline points="1.8,15.799999999999999 22.7,22.2 29,19.7" fill="none" stroke="#fff" stroke-width="0.6" opacity="0.55"/><path d="M9.2 15Q12.6 9.6 19.4 17.8" fill="none" stroke="#1c1c1c" stroke-width="1.3"/><rect x="5.2" y="19.6" width="1.7" height="3.6" rx="0.7" fill="#e8ecee" stroke="#50585c" stroke-width="0.4"/><rect x="15.2" y="22.2" width="1.7" height="3.6" rx="0.7" fill="#e8ecee" stroke="#50585c" stroke-width="0.4"/></svg>
<div class="sunk" style="left:1130px;top:680px;width:148px;height:38px"></div>
<div class="t" style="left:1209.70px;top:685px;letter-spacing:-0.120px;transform:scaleX(0.9680);transform-origin:0 0">3:17 PM</div>
<div class="t" style="left:1208.50px;top:701px;letter-spacing:-0.029px">7/4/2019</div>
<svg class="a" style="left:1136px;top:692px" width="8" height="10" viewBox="0 0 8 10" ><path d="M1.1 4.2L3.6 1.7L6.1 4.2M1.1 8.4L3.6 5.9L6.1 8.4" fill="none" stroke="#000" stroke-width="1.7"/></svg>
<svg class="a" style="left:1152px;top:690px" width="18" height="18" viewBox="0 0 18 18" ><path d="M4.4 2.3Q7.4 1.3 10.4 3.3V9.6Q7.6 8.1 4.4 9.3Z" fill="#fff" stroke="#585858" stroke-width="1"/><path d="M10.4 4.7Q13.6 6.4 16.9 5.7Q16.3 9.4 13.6 10.4Q11.8 10.8 10.4 9.6Z" fill="#f4f4f4" stroke="#585858" stroke-width="1"/><rect x="1.5" y="1.5" width="2.4" height="15.2" rx="1.1" fill="#fff" stroke="#505050" stroke-width="1"/></svg>
<svg class="a" style="left:1176px;top:690px" width="18" height="18" viewBox="0 0 18 18" ><rect x="5.6" y="3.4" width="11.2" height="11" rx="0.8" fill="#fff" stroke="#606060" stroke-width="1"/><rect x="7.2" y="5" width="8" height="7.6" fill="url(#gMon)"/><rect x="9.6" y="14.4" width="3.4" height="1.2" fill="#fff" stroke="#707070" stroke-width="0.5"/><rect x="5.4" y="15.3" width="10.6" height="1.8" rx="0.5" fill="#fff" stroke="#606060" stroke-width="0.8"/><path d="M2.2 2.6V6.2Q2.2 7.8 3.6 7.8H5Q6.4 7.8 6.4 6.2V2.6" fill="none" stroke="#484848" stroke-width="2.7" stroke-linecap="round"/><path d="M2.2 2.6V6.2Q2.2 7.8 3.6 7.8H5Q6.4 7.8 6.4 6.2V2.6" fill="none" stroke="#fff" stroke-width="1.1" stroke-linecap="round"/><rect x="3.4" y="8.4" width="1.8" height="8.4" fill="#fff" stroke="#484848" stroke-width="0.9"/></svg>
<svg class="a" style="left:1260px;top:693px" width="16" height="13" viewBox="0 0 16 13" ><rect x="0" y="0" width="15" height="12.4" fill="url(#gDesk)"/><rect x="0" y="9.6" width="15" height="1.6" fill="#182848"/><rect x="0" y="11.2" width="15" height="1.2" fill="#88b8e8"/><circle cx="2.2" cy="10.4" r="1.2" fill="#f0a020"/></svg>
</body>
</html>
